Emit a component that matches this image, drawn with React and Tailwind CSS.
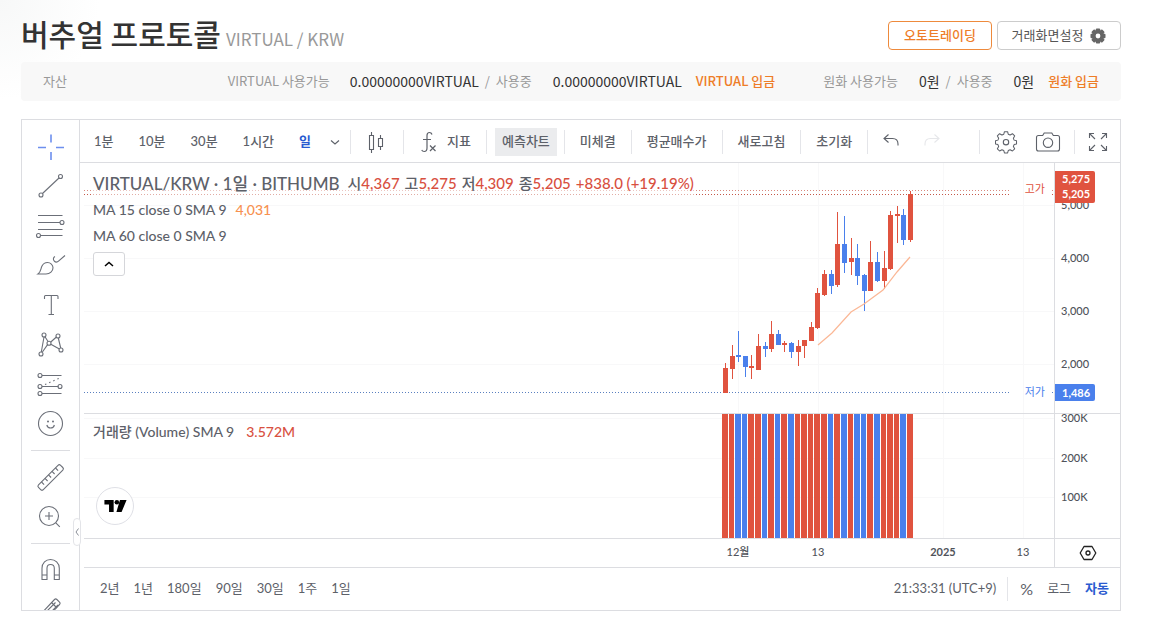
const RED = '#e0533f'
const BLUE = '#4a80ec'

// [direction, high, body top, body bottom, low]
const candles = [
  ['up', 200, 205, 230, 230],
  ['up', 182, 193, 206, 216],
  ['down', 168, 192, 194, 199],
  ['down', 193, 193, 204, 214],
  ['up', 192, 203, 205, 216],
  ['up', 171, 183, 207, 207],
  ['down', 179, 183, 186, 194],
  ['up', 158, 171, 186, 189],
  ['down', 167, 171, 182, 182],
  ['up', 178, 180, 182, 189],
  ['down', 179, 180, 189, 195],
  ['up', 177, 183, 189, 203],
  ['up', 177, 177, 183, 195],
  ['up', 159, 164, 178, 178],
  ['up', 125, 130, 165, 166],
  ['up', 107, 111, 132, 133],
  ['down', 107, 111, 123, 131],
  ['up', 49, 81, 122, 124],
  ['down', 53, 81, 100, 110],
  ['up', 75, 95, 99, 112],
  ['down', 81, 95, 113, 122],
  ['down', 111, 112, 128, 148],
  ['up', 78, 99, 128, 128],
  ['down', 89, 99, 118, 119],
  ['up', 88, 105, 118, 126],
  ['up', 48, 52, 106, 107],
  ['up', 43, 51, 53, 80],
  ['down', 46, 52, 77, 82],
  ['up', 28, 31, 77, 79],
]

const CHART_WIDTH = 970
const gridX = [654, 734, 859, 939]
const timeLabels = [
  { x: 654, label: '12월' },
  { x: 734, label: '13' },
  { x: 859, label: '2025', strong: true },
  { x: 939, label: '13' },
]
const priceLabels = [
  { y: 42, label: '5,000' },
  { y: 95, label: '4,000' },
  { y: 148, label: '3,000' },
  { y: 201, label: '2,000' },
]
const volumeLabels = [
  { y: 4, label: '300K' },
  { y: 44, label: '200K' },
  { y: 83, label: '100K' },
]

const candleX = (i) => Math.round(641 + i * 6.607)
const colorOf = (dir) => (dir === 'up' ? RED : BLUE)

function Icon({ size = 32, className = '', children }) {
  return (
    <svg
      width={size}
      height={size}
      viewBox={`0 0 ${size} ${size}`}
      fill="none"
      stroke="currentColor"
      strokeWidth="1.1"
      className={`shrink-0 ${className}`}
      aria-hidden="true"
    >
      {children}
    </svg>
  )
}

const drawTools = [
  {
    name: '십자선',
    active: true,
    icon: <path strokeWidth="1.6" d="M4 16.5h8M22 16.5h8M17 3.5v8M17 21v8" />,
  },
  {
    name: '추세선',
    icon: (
      <>
        <circle cx="26.5" cy="6.5" r="2" />
        <circle cx="7" cy="25" r="2" />
        <path d="M25 8 8.500 23.500" />
      </>
    ),
  },
  {
    name: '피보나치',
    icon: (
      <>
        <path d="M4 5.500h24.500M4 12.500h22M4 19.500h24.500M6.500 25.500h22" />
        <circle cx="28" cy="12.500" r="2" />
        <circle cx="4.500" cy="25.500" r="2" />
      </>
    ),
  },
  {
    name: '브러시',
    icon: (
      <>
        <path d="M4 25c3-2 2.500-5 4-8 1.200-2.400 3.200-3.500 5.500-3.500 3 0 5.500 2.300 5.500 5.300 0 3.500-3 6.200-7 6.200H4Z" />
        <path d="M21 7.500c-2 1-2 3.200-.8 4.500 1.400 1.400 3.400 1 4.600-.2L31 6.500" />
      </>
    ),
  },
  {
    name: '텍스트',
    icon: <path d="M10.500 10V7.500q0-1 1-1h11.500q1 0 1 1V10M17.300 6.500v19M14.500 25.500h5.500" />,
  },
  {
    name: '패턴',
    icon: (
      <>
        <path d="m10 9-2.700 15M11 8.800l3 4.700M13.600 16.600 8.400 24M16.800 14 22.400 9M16.800 16.300l8.600 4.800M24.300 10l2.400 10" />
        <circle cx="10" cy="7" r="2" />
        <circle cx="24" cy="8" r="2" />
        <circle cx="15" cy="15.200" r="2" />
        <circle cx="7" cy="26" r="2" />
        <circle cx="27" cy="22" r="2" />
      </>
    ),
  },
  {
    name: '예측',
    icon: (
      <>
        <path d="M8 7.500h19.500M8 18.500h16.500M8 25.500h19.500" />
        <path strokeDasharray="1.500 3" d="M11 16.500 27 9.500" />
        <circle cx="6" cy="7.500" r="2" />
        <circle cx="6" cy="18.500" r="2" />
        <circle cx="6" cy="25.500" r="2" />
        <circle cx="26" cy="18.500" r="2" />
      </>
    ),
  },
  {
    name: '아이콘',
    icon: (
      <>
        <circle cx="16.500" cy="16.500" r="12" />
        <path d="M12.800 18c1 4 6.600 4 7.600 0" />
        <g fill="currentColor" stroke="none">
          <circle cx="14" cy="14.500" r="1" />
          <circle cx="19" cy="14.500" r="1" />
        </g>
      </>
    ),
  },
]

const measureTools = [
  {
    name: '측정',
    icon: (
      <>
        <path d="M4.500 23.800 24 4.300q1.300-1.300 2.600 0l2.200 2.200q1.300 1.300 0 2.600L9.300 28.600q-1.300 1.300-2.600 0l-2.200-2.200q-1.300-1.300 0-2.600Z" />
        <path d="m7.500 21 2.600 2.600M11 17.400l2.600 2.600M14.500 13.900l2.600 2.600M18 10.400l2.600 2.600M21.500 7l2.600 2.600" />
      </>
    ),
  },
  {
    name: '확대',
    icon: (
      <>
        <circle cx="15" cy="15" r="9.500" />
        <path d="M15 11v8M11 15h8M21.800 21.800l4 4" />
      </>
    ),
  },
]

const extraTools = [
  {
    name: '자석',
    icon: (
      <path d="M8 25.500V14.300C8 9 11.800 5.500 16.500 5.500S25.300 9 25.300 14.300v11.200h-5V14.300c0-2.300-1.700-3.800-3.800-3.800s-3.500 1.500-3.500 3.800v11.200H8ZM8 21h5M20.300 21h5" />
    ),
  },
  {
    name: '드로잉 유지',
    icon: (
      <>
        <path d="M5 22 20.500 5.500q1.200-1.200 2.400 0l2.600 2.600q1.200 1.200 0 2.400L10 27H5v-5Z" />
        <path d="m8.500 21.500 13-13M11 24l13-13M17.500 8.500l5.500 5.500" />
        <path d="M20 20c3-2 7-2 8 2" />
      </>
    ),
  },
]

function ToolButton({ tool }) {
  return (
    <button
      type="button"
      aria-label={tool.name}
      className={`flex flex-1 items-center pl-3 ${tool.active ? 'text-[#6d8fee]' : 'text-[#6b6f78]'}`}
    >
      <Icon>{tool.icon}</Icon>
    </button>
  )
}

function Sidebar() {
  return (
    <aside className="relative w-[58px] shrink-0 border-r border-[#dcdde1]">
      <div className="flex h-0 min-h-full flex-col overflow-hidden pt-[7px]">
        <div className="flex h-[316px] shrink-0 flex-col">
          {drawTools.map((tool) => (
            <ToolButton key={tool.name} tool={tool} />
          ))}
        </div>
        <hr className="mx-[9px] mt-[7px] mb-[6px] shrink-0 border-[#dcdde1]" />
        <div className="flex h-20 shrink-0 flex-col">
          {measureTools.map((tool) => (
            <ToolButton key={tool.name} tool={tool} />
          ))}
        </div>
        <hr className="mx-[9px] mt-[6px] mb-[6px] shrink-0 border-[#dcdde1]" />
        <div className="flex h-20 shrink-0 flex-col">
          {extraTools.map((tool) => (
            <ToolButton key={tool.name} tool={tool} />
          ))}
        </div>
      </div>
      <button
        type="button"
        aria-label="도구모음 숨기기"
        className="absolute -right-0.5 bottom-16 flex h-7 w-2 items-center justify-center rounded-sm border border-[#e3e4e8] bg-white text-[#8b8f98]"
      >
        <svg width="4" height="8" viewBox="0 0 4 8" fill="none" stroke="currentColor" aria-hidden="true">
          <path d="M3.500 .5 1 4l2.500 3.500" />
        </svg>
      </button>
    </aside>
  )
}

function Divider({ className = '' }) {
  return <span className={`h-6 w-px shrink-0 bg-[#e4e5e9] ${className}`} />
}

function Toolbar() {
  return (
    <div className="flex h-[43px] shrink-0 items-center border-b border-[#dcdde1] pt-0.5 pl-[14px] text-[13px] font-medium whitespace-nowrap text-[#5d6169]">
      <div className="flex items-center gap-[25px]">
        <button type="button">1분</button>
        <button type="button">10분</button>
        <button type="button">30분</button>
        <button type="button">1시간</button>
        <button type="button" className="font-bold text-[#2a5bd0]">
          일
        </button>
      </div>
      <button type="button" aria-label="시간 간격" className="ml-[19px]">
        <Icon size={10}>
          <path d="M1 3.500 5 7l4-3.500" />
        </Icon>
      </button>
      <Divider className="ml-[10px]" />
      <button type="button" aria-label="차트 유형" className="mx-3">
        <Icon size={28}>
          <path d="M6.500 7.500h4v14h-4zM8.500 4v3.500M8.500 21.500V25M15.500 10.500h4v8h-4zM17.500 7v3.500M17.500 18.500V22" />
        </Icon>
      </button>
      <Divider />
      <button type="button" className="ml-[10px] flex items-center gap-[5px]">
        <Icon size={28}>
          <path
            strokeWidth="1.200"
            d="M18 6.500c-.5-1.500-1.500-2-2.500-2-1.800 0-2.500 1.300-2.500 3v12.500c0 2-1 3.500-2.800 3.500-1.200 0-2-.5-2.500-1.500M9 11.500h8M16 17.500l5.500 5.500M21.500 17.500 16 23"
          />
        </Icon>
        지표
      </button>
      <Divider className="ml-[15px]" />
      <button type="button" className="ml-2 h-7 bg-[#ebecee] px-[7px]">
        예측차트
      </button>
      <Divider className="ml-[7px]" />
      <button type="button" className="px-[15px]">
        미체결
      </button>
      <Divider />
      <button type="button" className="px-[15px]">
        평균매수가
      </button>
      <Divider />
      <button type="button" className="px-[15px]">
        새로고침
      </button>
      <Divider />
      <button type="button" className="px-[15px]">
        초기화
      </button>
      <Divider />
      <button type="button" aria-label="실행 취소" className="ml-[10px]">
        <Icon size={28}>
          <path d="M10.500 6.500 6 10.500l4.500 4M6 10.500h8.500c3.500 0 5.500 2 5.500 5.500v1.500" />
        </Icon>
      </button>
      <button type="button" aria-label="다시 실행" disabled className="ml-3 text-[#e6e7ea]">
        <Icon size={28}>
          <path d="M16.500 6.500 21 10.500l-4.500 4M21 10.500h-8.500C9 10.500 7 12.500 7 16v1.500" />
        </Icon>
      </button>
      <div className="ml-auto flex items-center pr-2">
        <Divider />
        <button type="button" aria-label="설정" className="ml-3">
          <Icon size={28}>
            <path d="m12.300 3.500 3.400 0 .7 2.600 2 .9 2.500-1.400 2.400 2.400-1.400 2.500.8 2 2.600.7v3.400l-2.600.7-.8 2 1.400 2.500-2.400 2.400-2.500-1.400-2 .9-.7 2.600h-3.400l-.7-2.600-2-.9-2.500 1.400-2.400-2.400 1.400-2.500-.8-2-2.600-.7v-3.400l2.600-.7.8-2L4.700 8l2.400-2.400L9.600 7l2-.9.7-2.600Z" strokeLinejoin="round" transform="translate(1 .5) scale(.93)" />
            <circle cx="14" cy="14.200" r="2.700" />
          </Icon>
        </button>
        <button type="button" aria-label="스크린샷" className="ml-[14px]">
          <Icon size={28}>
            <path d="M4.500 7.500h4.200l1.500-2.500h7.600l1.500 2.500h4.200q2 0 2 2v11.500q0 2-2 2h-19q-2 0-2-2V9.500q0-2 2-2Z" />
            <circle cx="14" cy="14.700" r="4.700" />
          </Icon>
        </button>
        <Divider className="ml-3" />
        <button type="button" aria-label="전체화면" className="ml-[9px]">
          <Icon size={28}>
            <path d="M5.500 10V5.500H10M5.500 5.500l5.500 5.500M18 5.500h4.500V10M22.500 5.500 17 11M5.500 18v4.500H10M5.500 22.500 11 17M18 22.500h4.500V18M22.500 22.500 17 17" />
          </Icon>
        </button>
      </div>
    </div>
  )
}

function PriceChart() {
  return (
    <svg
      viewBox={`0 0 ${CHART_WIDTH} 250`}
      preserveAspectRatio="none"
      className="block h-full w-full"
      role="img"
      aria-label="VIRTUAL/KRW 가격 차트"
    >
      <g stroke="#f8f8f9">
        {gridX.map((x) => (
          <line key={x} x1={x + 0.5} x2={x + 0.5} y1="0" y2="250" />
        ))}
        {priceLabels.map(({ y }) => (
          <line key={y} x1="0" x2={CHART_WIDTH} y1={y + 0.5} y2={y + 0.5} />
        ))}
      </g>
      <g strokeDasharray="1 2">
        <path d="M0 27.500H926M968 27.500h2" stroke="#d98a80" />
        <path d="M0 31.500H926M968 31.500h2" stroke="#c4584a" />
        <path d="M0 229.500H926M968 229.500h2" stroke="#5a80c0" />
      </g>
      {candles.map(([dir, high, top, bottom, low], i) => (
        <g key={i} fill={colorOf(dir)}>
          <rect x={candleX(i)} y={high} width="1" height={low - high} />
          <rect x={candleX(i) - 2} y={top} width="5" height={bottom - top} />
        </g>
      ))}
      <polyline
        points="734,182 748,170 767,149 780,141 799,127 813,109 826,94"
        fill="none"
        stroke="#fbb795"
        strokeWidth="1.200"
      />
    </svg>
  )
}

function VolumeChart() {
  return (
    <svg
      viewBox={`0 0 ${CHART_WIDTH} 124`}
      preserveAspectRatio="none"
      className="block h-full w-full"
      role="img"
      aria-label="거래량 차트"
    >
      <g stroke="#f8f8f9">
        {gridX.map((x) => (
          <line key={x} x1={x + 0.5} x2={x + 0.5} y1="0" y2="124" />
        ))}
        {volumeLabels.map(({ y }) => (
          <line key={y} x1="0" x2={CHART_WIDTH} y1={y + 0.5} y2={y + 0.5} />
        ))}
      </g>
      {candles.map(([dir], i) => (
        <rect
          key={i}
          x={candleX(i) - 3}
          y="0"
          width={candleX(i + 1) - candleX(i) - 1}
          height="124"
          fill={colorOf(dir)}
        />
      ))}
    </svg>
  )
}

function Legend() {
  const ohlc = [
    ['시', '4,367'],
    ['고', '5,275'],
    ['저', '4,309'],
    ['종', '5,205'],
  ]

  return (
    <div className="absolute top-2 left-[9px] text-sm font-medium whitespace-nowrap text-[#5d6169]">
      <div className="flex h-[26px] items-center bg-white/50 text-[15px]">
        <h2 className="text-[17px] font-medium">VIRTUAL/KRW · 1일 · BITHUMB</h2>
        <dl className="ml-2 flex gap-[5px]">
          {ohlc.map(([name, value]) => (
            <div key={name} className="flex">
              <dt>{name}</dt>
              <dd className="text-[#d8503f]">{value}</dd>
            </div>
          ))}
        </dl>
        <span className="ml-[5px] text-[#d8503f]">+838.0 (+19.19%)</span>
      </div>
      <p className="flex h-[26px] items-center gap-[9px]">
        MA 15 close 0 SMA 9 <span className="text-[#f79150]">4,031</span>
      </p>
      <p className="flex h-[26px] items-center">MA 60 close 0 SMA 9</p>
      <button
        type="button"
        aria-label="지표 접기"
        className="mt-[3px] flex h-6 w-8 items-center justify-center rounded-[3px] border border-[#d5d6da] bg-white text-black"
      >
        <svg width="10" height="6" viewBox="0 0 10 6" fill="none" stroke="currentColor" strokeWidth="1.500" aria-hidden="true">
          <path d="m1 5 4-3.500L9 5" />
        </svg>
      </button>
    </div>
  )
}

function AxisLabels({ labels }) {
  return labels.map(({ y, label }) => (
    <span key={label} className="absolute left-[6px] -translate-y-1/2" style={{ top: y }}>
      {label}
    </span>
  ))
}

function ChartPanes() {
  return (
    <div className="ml-1 grid grid-cols-[1fr_66px] text-[11px] font-medium text-[#50535a]">
      <div className="relative h-[250px]">
        <PriceChart />
        <Legend />
        <span className="absolute top-[18px] right-[9px] leading-4 font-normal text-[#e0533f]">고가</span>
        <span className="absolute top-[221px] right-[9px] leading-4 font-normal text-[#4a80ec]">저가</span>
      </div>
      <div className="relative border-l border-[#dcdde1]">
        <AxisLabels labels={priceLabels} />
        <div className="absolute top-2 left-0 flex h-8 w-10 flex-col rounded-r-xs bg-[#e0533f] pl-[7px] leading-[15px] font-bold text-white">
          <span>5,275</span>
          <span>5,205</span>
        </div>
        <div className="absolute top-[221px] left-0 h-[17px] w-10 rounded-r-xs bg-[#4a80ec] pl-[7px] leading-[17px] font-bold text-white">
          1,486
        </div>
      </div>

      <div className="relative h-[125px] border-t border-[#dcdde1]">
        <VolumeChart />
        <p className="absolute top-2 left-[9px] flex gap-3 text-sm text-[#5d6169]">
          거래량 (Volume) SMA 9 <span className="text-[#d8503f]">3.572M</span>
        </p>
        <a
          href="https://www.tradingview.com/"
          aria-label="TradingView"
          className="absolute bottom-[13px] left-3 flex h-[38px] w-[38px] items-center justify-center rounded-full border border-[#dfe0e6] bg-white text-black"
        >
          <svg width="23" height="12" viewBox="0 0 24 13" fill="currentColor" aria-hidden="true">
            <path d="M0 0h10v13H5V5H0zM16.800 0H24l-5.400 13H13z" />
            <circle cx="13.500" cy="2.500" r="2.500" />
          </svg>
        </a>
      </div>
      <div className="relative border-t border-l border-[#dcdde1]">
        <AxisLabels labels={volumeLabels} />
      </div>

      <div className="relative h-[29px] border-t border-[#dcdde1]">
        {timeLabels.map(({ x, label, strong }) => (
          <span
            key={x}
            className={`absolute top-[5px] -translate-x-1/2 leading-4 ${strong ? 'font-bold' : ''}`}
            style={{ left: `${(x / CHART_WIDTH) * 100}%` }}
          >
            {label}
          </span>
        ))}
      </div>
      <div className="flex items-center justify-center border-t border-l border-[#dcdde1]">
        <button type="button" aria-label="축 설정" className="text-[#222]">
          <Icon size={18}>
            <path strokeWidth="1.300" strokeLinejoin="round" d="M5 2.500h8L16.800 9 13 15.500H5L1.200 9z" />
            <circle cx="9" cy="9" r="2" strokeWidth="1.300" />
          </Icon>
        </button>
      </div>
    </div>
  )
}

function BottomBar() {
  const ranges = ['2년', '1년', '180일', '90일', '30일', '1주', '1일']

  return (
    <div className="ml-1 flex h-[43px] items-center justify-between border-t border-[#dcdde1] pr-[11px] pl-4 text-[13px] text-[#5d6169]">
      <div className="flex gap-[14px]">
        {ranges.map((range) => (
          <button key={range} type="button">
            {range}
          </button>
        ))}
      </div>
      <div className="flex items-center">
        <button type="button">21:33:31 (UTC+9)</button>
        <Divider className="ml-[11px]" />
        <button type="button" className="ml-3 text-base">
          %
        </button>
        <button type="button" className="ml-[14px]">
          로그
        </button>
        <button type="button" className="ml-[14px] font-bold text-[#2a5bd0]">
          자동
        </button>
      </div>
    </div>
  )
}

function AssetBar() {
  return (
    <div className="flex h-[39px] items-center rounded bg-[#f8f8f8] px-[22px] pb-0.5 text-[13px] whitespace-nowrap text-[#999]">
      <span>자산</span>
      <span className="ml-auto">VIRTUAL 사용가능</span>
      <span className="ml-5 text-sm text-[#333]">0.00000000VIRTUAL</span>
      <span className="ml-1.5 flex gap-1.5">
        <span>/</span> 사용중
      </span>
      <span className="ml-[21px] text-sm text-[#333]">0.00000000VIRTUAL</span>
      <a href="#deposit-virtual" className="ml-[14px] font-medium text-[#ee7d28]">
        VIRTUAL 입금
      </a>
      <span className="ml-12">원화 사용가능</span>
      <span className="ml-[21px] text-sm text-[#333]">0원</span>
      <span className="ml-1.5 flex gap-1.5">
        <span>/</span> 사용중
      </span>
      <span className="ml-[21px] text-sm text-[#333]">0원</span>
      <a href="#deposit-krw" className="ml-[14px] font-medium text-[#ee7d28]">
        원화 입금
      </a>
    </div>
  )
}

function PageHeader() {
  return (
    <header className="flex h-[62px] items-start justify-between">
      <div className="flex items-baseline gap-[5px] pt-[13px]">
        <h1 className="text-[30px] leading-10 font-medium text-[#333]">버추얼 프로토콜</h1>
        <span className="text-[17px] text-[#999]">VIRTUAL / KRW</span>
      </div>
      <div className="flex gap-[5px] pt-[21px] text-[13px]">
        <button
          type="button"
          className="h-[29px] w-[104px] rounded border border-[#ee8a3c] bg-white pb-0.5 font-medium text-[#ee7d28]"
        >
          오토트레이딩
        </button>
        <button
          type="button"
          className="flex h-[29px] w-[124px] items-center justify-center gap-[7px] rounded border border-[#ccc] bg-white text-[#555]"
        >
          <span className="pb-0.5">거래화면설정</span>
          <svg width="16" height="16" viewBox="0 0 16 16" aria-hidden="true">
            <g fill="#666">
              <circle cx="8" cy="8" r="6" />
              <rect x="5.800" y=".5" width="4.400" height="15" rx="1" />
              <rect x=".5" y="5.800" width="15" height="4.400" rx="1" />
              <rect x="5.800" y=".5" width="4.400" height="15" rx="1" transform="rotate(45 8 8)" />
              <rect x="5.800" y=".5" width="4.400" height="15" rx="1" transform="rotate(-45 8 8)" />
            </g>
            <circle cx="8" cy="8" r="2.400" fill="#fff" />
          </svg>
        </button>
      </div>
    </header>
  )
}

function App() {
  return (
    <main className="min-h-screen bg-[radial-gradient(circle_at_top_left,#f7f8f8,#ffffff_100px)] pr-9 pb-7 pl-[21px] font-['Noto_Sans_CJK_KR',sans-serif]">
      <PageHeader />
      <AssetBar />
      <section className="mt-[18px] flex border border-[#dcdde1] bg-white font-['Lato','Noto_Sans_CJK_KR',sans-serif]">
        <Sidebar />
        <div className="min-w-0 flex-1">
          <Toolbar />
          <ChartPanes />
          <BottomBar />
        </div>
      </section>
    </main>
  )
}

export default App
